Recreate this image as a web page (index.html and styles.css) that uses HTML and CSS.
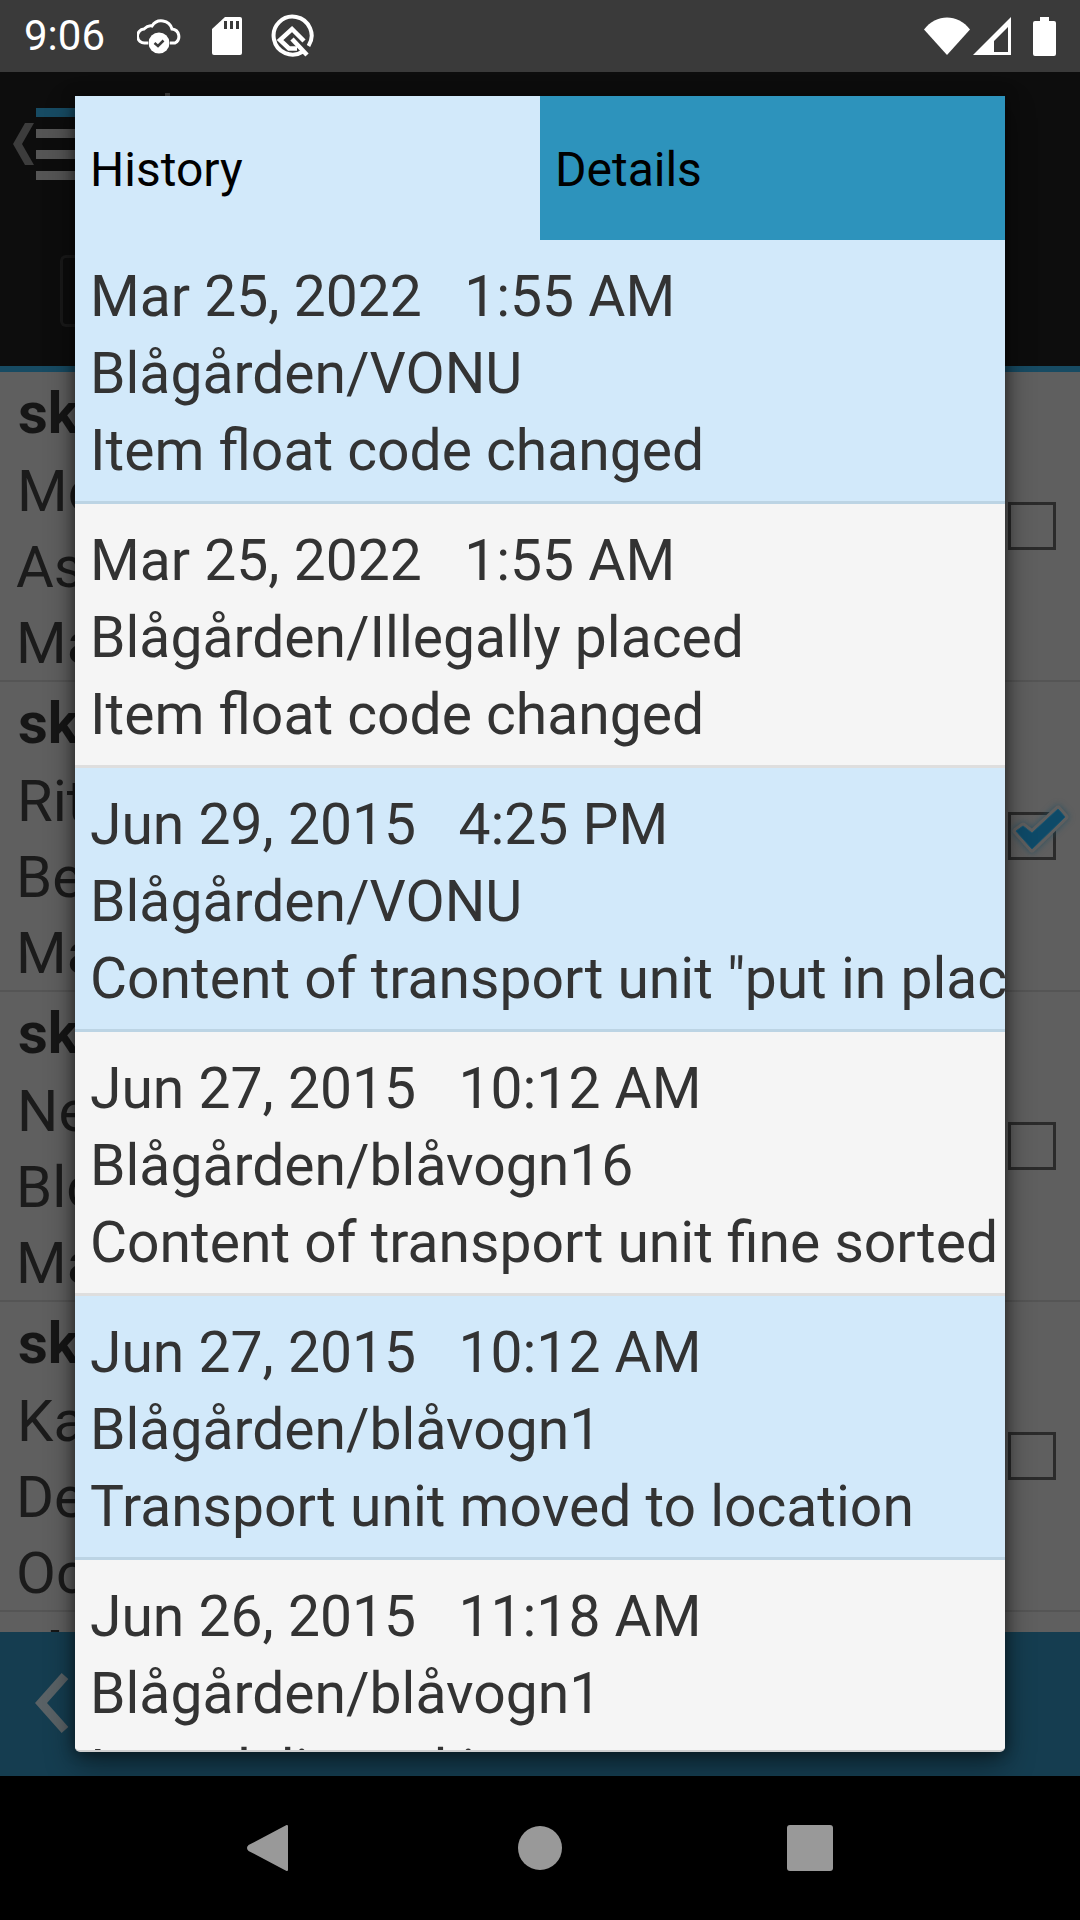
FILE: index.html
```html
<!DOCTYPE html>
<html lang="en">
<head>
<meta charset="utf-8">
<title>History</title>
<link rel="stylesheet" href="styles.css">
</head>
<body>
<div class="screen">
  <div class="status">
    <span class="time">9:06</span>
    <svg class="ic-cloud" width="46" height="36" viewBox="0 0 46 36">
      <path d="M11 25H8A7 7 0 0 1 7 11Q11 7 15 8A11 11 0 0 1 35 11A7.500 7.500 0 0 1 38 25H33" fill="none" stroke="#fff" stroke-width="3"/>
      <circle cx="22" cy="25" r="10.500" fill="#fff"/>
      <path d="M17.500 25l3.500 3 5.500-5.500" fill="none" stroke="#3a3a3a" stroke-width="2.500"/>
    </svg>
    <svg class="ic-sd" width="30" height="38" viewBox="0 0 30 38">
      <path d="M13 0H28a2 2 0 0 1 2 2V36a2 2 0 0 1-2 2H2a2 2 0 0 1-2-2V12Z" fill="#fff"/>
      <path d="M12 4h3v8h-3zM18 4h3v8h-3zM24 4h3v8h-3z" fill="#3a3a3a"/>
    </svg>
    <svg class="ic-q" width="44" height="44" viewBox="0 0 44 44">
      <path d="M32 37.500A19 19 0 1 1 37.500 32" fill="none" stroke="#fff" stroke-width="4"/>
      <path d="M33 27L21 15 9 26l9 8.500h8" fill="none" stroke="#fff" stroke-width="4.500"/>
      <path d="M21 25L36 41" fill="none" stroke="#fff" stroke-width="4.500"/>
    </svg>
    <span class="spacer"></span>
    <svg class="ic-wifi" width="46" height="38" viewBox="0 0 46 38"><path d="M0 12.500C12-3.500 34-3.500 46 12.500L23 38Z" fill="#fff"/></svg>
    <svg class="ic-signal" width="38" height="38" viewBox="0 0 38 38"><path d="M38 0V38H0ZM35 10L21 24V35H35Z" fill="#fff" fill-rule="evenodd"/></svg>
    <svg class="ic-batt" width="23" height="39" viewBox="0 0 23 39"><path d="M7 0h9v4h5a2 2 0 0 1 2 2V37a2 2 0 0 1-2 2H2a2 2 0 0 1-2-2V6a2 2 0 0 1 2-2h5Z" fill="#fff"/></svg>
  </div>

  <header class="appbar">
    <div class="appbar-top">
      <svg class="chev" width="21" height="42" viewBox="0 0 21 42"><path d="M12 0h9L9 21 21 42h-9L0 21Z" fill="#3c3c3c"/></svg>
      <div class="burger"><i class="bar bar-blue"></i><i class="bar"></i><i class="bar"></i><i class="bar"></i></div>
      <span class="title-mark"></span>
    </div>
    <div class="search"></div>
  </header>

  <main class="list">
    <div class="item">
      <div class="lines"><b class="head">sk</b><span class="name">Me</span><span>As</span><span>Ma</span></div>
      <span class="box"></span>
    </div>
    <div class="item">
      <div class="lines"><b class="head">sk</b><span class="name">Rit</span><span>Be</span><span>Ma</span></div>
      <span class="box">
        <svg class="tick" width="49" height="40" viewBox="0 0 49 40"><path d="M0 22L7 17 16 24 42 0 49 8 16 40Z" fill="#0e4a68" stroke="#5f5f5f" stroke-width="7" stroke-linejoin="round" paint-order="stroke"/><path d="M0 22L7 17 16 24 42 0 49 8 16 40Z" fill="#0e4a68" stroke="#1b5570" stroke-width="1"/></svg>
      </span>
    </div>
    <div class="item">
      <div class="lines"><b class="head">sk</b><span class="name">Ne</span><span>Blo</span><span>Ma</span></div>
      <span class="box"></span>
    </div>
    <div class="item">
      <div class="lines"><b class="head">sk</b><span class="name">Ka</span><span>De</span><span>Oc</span></div>
      <span class="box"></span>
    </div>
    <div class="item">
      <div class="lines"><b class="head">sk</b></div>
    </div>
  </main>

  <footer class="bottombar">
    <svg class="chev-bottom" width="36" height="64" viewBox="0 0 36 64"><path d="M30 5L6 32l24 27" fill="none" stroke="#5a6266" stroke-width="9"/></svg>
  </footer>

  <nav class="navbar">
    <svg width="44" height="48" viewBox="0 0 44 48"><path d="M41 2V46L3 26a2.500 2.500 0 0 1 0-4Z" fill="#999" stroke="#999" stroke-width="2" stroke-linejoin="round"/></svg>
    <span class="nav-dot"></span>
    <span class="nav-sq"></span>
  </nav>

  <div class="dialog">
    <div class="tabs">
      <div class="tab tab-on">History</div>
      <div class="tab tab-off">Details</div>
    </div>
    <div class="rows">
      <div class="row blue"><div>Mar 25, 2022 &nbsp; 1:55 AM</div><div>Blågården/VONU</div><div>Item float code changed</div></div>
      <div class="row"><div>Mar 25, 2022 &nbsp; 1:55 AM</div><div>Blågården/Illegally placed</div><div>Item float code changed</div></div>
      <div class="row blue"><div>Jun 29, 2015 &nbsp; 4:25 PM</div><div>Blågården/VONU</div><div>Content of transport unit "put in place"</div></div>
      <div class="row"><div>Jun 27, 2015 &nbsp; 10:12 AM</div><div>Blågården/blåvogn16</div><div>Content of transport unit fine sorted</div></div>
      <div class="row blue"><div>Jun 27, 2015 &nbsp; 10:12 AM</div><div>Blågården/blåvogn1</div><div>Transport unit moved to location</div></div>
      <div class="row"><div>Jun 26, 2015 &nbsp; 11:18 AM</div><div>Blågården/blåvogn1</div><div>Item delivered in</div></div>
    </div>
  </div>
</div>
</body>
</html>
```
FILE: styles.css
```css
* { box-sizing: border-box; }
html, body { margin: 0; padding: 0; }
body { width: 1080px; height: 1920px; overflow: hidden; background: #000; font-family: Roboto, "Liberation Sans", sans-serif; }
.screen { position: relative; width: 1080px; height: 1920px; display: flex; flex-direction: column; overflow: hidden; }

.status { flex: 0 0 72px; background: #3a3a3a; display: flex; align-items: center; padding-left: 24px; padding-right: 24px; }
.time { color: #fff; font-size: 42px; line-height: 72px; width: 113px; }
.ic-cloud { margin-right: 29px; }
.ic-sd { margin-right: 29px; }
.ic-q { margin-top: -1px; }
.spacer { flex: 1; }
.ic-wifi { margin-right: 3px; }
.ic-signal { margin-right: 22px; }

.appbar { flex: 0 0 300px; background: #0d0d0d; border-bottom: 6px solid #174b63; display: flex; flex-direction: column; }
.appbar-top { display: flex; align-items: flex-start; gap: 2px; padding: 36px 0 0 13px; height: 183px; }
.chev { margin-top: 15px; }
.burger { display: flex; flex-direction: column; gap: 12px; }
.bar { display: block; width: 60px; height: 9px; background: #555; }
.bar-blue { background: #174b63; }
.title-mark { width: 5px; height: 3px; margin: -15px 0 0 67px; background: #444; }
.search { width: 60px; height: 72px; margin-left: 60px; border: 3px solid #1a1a1a; border-right: 0; border-radius: 6px 0 0 6px; }

.list { flex: 1; min-height: 0; overflow: hidden; background: #5f5f5f; color: #1b1b1b; }
.item { height: 310px; border-bottom: 2px solid #555; display: flex; justify-content: space-between; padding-right: 24px; font-size: 58px; }
.lines { display: flex; flex-direction: column; padding: 6px 0 0 16px; }
.lines span { line-height: 76px; height: 76px; }
.lines .name { padding-left: 1px; }
.head { font-weight: 700; line-height: 71px; height: 71px; margin-bottom: 4px; color: #161616; padding-left: 2px; }
.box { position: relative; width: 48px; height: 48px; border: 3px solid #2b2b2b; margin-top: 130px; }
.tick { position: absolute; left: 5px; top: -6px; overflow: visible; filter: drop-shadow(0 0 3px rgba(23,75,99,.7)); }

.bottombar { flex: 0 0 144px; background: #153d50; display: flex; align-items: center; padding-left: 35px; }
.chev-bottom { margin-top: -2px; }

.navbar { flex: 0 0 144px; background: #000; display: flex; align-items: center; justify-content: center; position: relative; }
.navbar svg { position: absolute; left: 246px; top: 48px; }
.nav-dot { width: 44px; height: 44px; border-radius: 50%; background: #999; }
.nav-sq { position: absolute; left: 787px; top: 49px; width: 46px; height: 46px; border-radius: 3px; background: #999; }

.dialog { position: absolute; left: 75px; top: 96px; width: 930px; height: 1656px; border-bottom: 2px solid #cfcfcf; border-radius: 0 0 5px 5px; background: #f5f5f5; overflow: hidden; display: flex; flex-direction: column; box-shadow: 0 12px 30px rgba(0,0,0,.45), 0 0 14px rgba(0,0,0,.45); }
.tabs { flex: 0 0 144px; display: grid; grid-template-columns: 1fr 1fr; }
.tab { display: flex; align-items: center; padding: 2px 0 0 15px; font-size: 48px; color: #000; background: #d2e9fa; }
.tab-off { background: #2d93bc; }
.rows { flex: 1; min-height: 0; overflow: hidden; }
.row { height: 264px; padding: 18px 0 0 15px; border-bottom: 3px solid #dedede; font-size: 57px; line-height: 77px; color: #333; white-space: nowrap; background: #f5f5f5; }
.row.blue { background: #d2e9fa; border-bottom-color: #bcd4e4; }
```
